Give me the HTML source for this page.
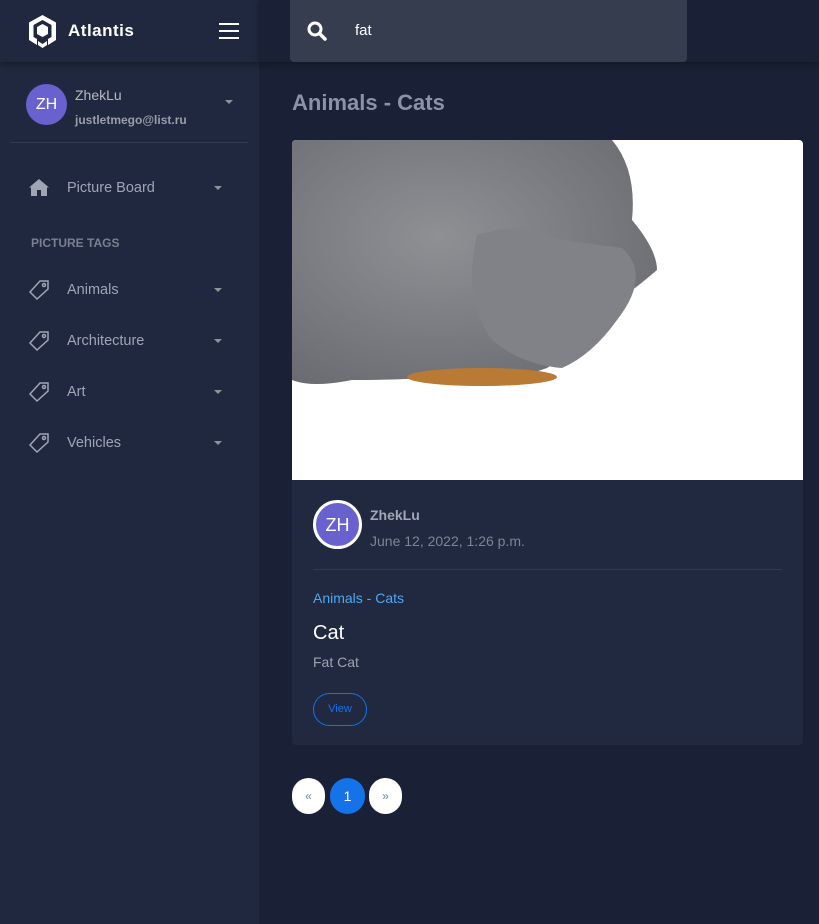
<!DOCTYPE html>
<html><head><meta charset="utf-8"><style>
*{margin:0;padding:0;box-sizing:border-box}
body{width:819px;height:924px;background:#1a2035;font-family:"Liberation Sans",sans-serif;position:relative;overflow:hidden}
.side{position:absolute;left:0;top:0;width:259px;height:924px;background:#1f283e}
.logo{height:62px;box-shadow:0 2px 6px rgba(0,0,0,.35);position:relative}
.logo .t{position:absolute;left:68px;top:21px;color:#fff;font-weight:bold;font-size:17px;letter-spacing:.5px}
.burger{position:absolute;left:219px;top:23px;width:20px}
.burger i{display:block;height:2px;background:#fff;margin-bottom:5px}
.user{position:absolute;left:10px;top:62px;width:238px;height:81px;border-bottom:1px solid #2f3a55}
.av{position:absolute;border-radius:50%;background:#6861ce;color:#fff;text-align:center}
.nm{position:absolute;color:#b9babf;font-size:14px}
.caret{position:absolute;width:0;height:0;border-left:4px solid transparent;border-right:4px solid transparent;border-top:4px solid #8d9498}
.item{position:absolute;left:67px;color:#a0a5b5;font-size:14.5px}
.main h1{position:absolute;left:292px;top:90px;color:#8b92a9;font-size:22px;font-weight:bold}
.search{position:absolute;left:290px;top:0;width:397px;height:62px;background:#363d4f;border-radius:0 0 4px 4px}
.card{position:absolute;left:292px;top:140px;width:511px;height:605px;background:#202940;border-radius:4px;overflow:hidden}
.pg{position:absolute;top:778px;width:33px;height:36px;border-radius:18px;background:#fff;color:#6c7cb2;text-align:center;line-height:36px;font-size:12px}
</style></head><body>
<div class="side">
 <div class="logo">
  <svg style="position:absolute;left:27px;top:14px" width="31" height="35" viewBox="0 0 31 35"><path d="M15.5 1 L29 8.5 V26 L21 31 V25 L24.5 23 V11 L15.5 6 L6.5 11 V23 L10 25 V31 L2 26 V8.5Z" fill="#fff"/><path d="M15.5 10 L21 13 V20 L15.5 23 L10 20 V13Z" fill="#fff"/><path d="M11 27 L15.5 30 L20 27 V31 L15.5 34 L11 31Z" fill="#fff"/></svg>
  <div class="t">Atlantis</div>
  <div class="burger"><i></i><i></i><i></i></div>
 </div>
 <div class="user">
  <div class="av" style="left:16px;top:22px;width:41px;height:41px;line-height:41px;font-size:16px">ZH</div>
  <div class="nm" style="left:65px;top:25px">ZhekLu</div>
  <div class="nm" style="left:65px;top:51px;font-size:12px;font-weight:bold;color:#9a9ea8">justletmego@list.ru</div>
  <div class="caret" style="left:215px;top:38px"></div>
 </div>
 <svg style="position:absolute;left:28px;top:178px" width="22" height="19" viewBox="0 0 22 19"><path d="M11 1 L1 9.5 L3 9.5 L3 18 H9 V12 H13 V18 H19 V9.5 H21Z" fill="#a0a5b5"/></svg>
 <div class="item" style="top:180px">Picture Board</div><div class="caret" style="left:214px;top:186px"></div>
 <div style="position:absolute;left:31px;top:236px;color:#7a8090;font-size:12px;font-weight:bold">PICTURE TAGS</div>
 <div class="item" style="top:282px">Animals</div><div class="caret" style="left:214px;top:288px"></div>
 <div class="item" style="top:333px">Architecture</div><div class="caret" style="left:214px;top:339px"></div>
 <div class="item" style="top:384px">Art</div><div class="caret" style="left:214px;top:390px"></div>
 <div class="item" style="top:435px">Vehicles</div><div class="caret" style="left:214px;top:441px"></div>
 <svg style="position:absolute;left:28px;top:280px" width="22" height="180" viewBox="0 0 22 180"><g fill="none" stroke="#a0a5b5" stroke-width="1.5"><path d="M12 1 H20 V9 L9 19 L2 12 Z"/><circle cx="16" cy="5" r="1.5"/></g>
 <g fill="none" stroke="#a0a5b5" stroke-width="1.5" transform="translate(0,51)"><path d="M12 1 H20 V9 L9 19 L2 12 Z"/><circle cx="16" cy="5" r="1.5"/></g>
 <g fill="none" stroke="#a0a5b5" stroke-width="1.5" transform="translate(0,102)"><path d="M12 1 H20 V9 L9 19 L2 12 Z"/><circle cx="16" cy="5" r="1.5"/></g>
 <g fill="none" stroke="#a0a5b5" stroke-width="1.5" transform="translate(0,153)"><path d="M12 1 H20 V9 L9 19 L2 12 Z"/><circle cx="16" cy="5" r="1.5"/></g></svg>
</div>
<div style="position:absolute;left:259px;top:0;width:560px;height:62px;background:#1a2035;box-shadow:0 2px 6px rgba(0,0,0,.3)"></div>
<div class="search">
 <svg style="position:absolute;left:17px;top:21px" width="20" height="20" viewBox="0 0 20 20"><circle cx="8" cy="8" r="6" fill="none" stroke="#fff" stroke-width="3"/><path d="M12.5 12.5 L18 18" stroke="#fff" stroke-width="3.5" stroke-linecap="round"/></svg>
 <div style="position:absolute;left:65px;top:22px;color:#fff;font-size:15px">fat</div>
</div>
<div class="main"><h1>Animals - Cats</h1></div>
<div class="card">
 <div style="height:340px;background:#fff;position:relative;overflow:hidden">
  <svg width="511" height="340" viewBox="0 0 511 340"><defs><radialGradient id="g" cx=".4" cy=".4" r=".7"><stop offset="0" stop-color="#8e9094"/><stop offset="1" stop-color="#6a6c71"/></radialGradient></defs>
  <path d="M0 0 H320 Q345 30 340 80 Q365 110 365 130 Q330 160 310 170 Q285 210 255 228 Q230 238 200 232 Q140 240 60 240 Q20 248 0 240Z" fill="url(#g)"/>
  <path d="M185 95 Q230 80 270 100 L330 108 Q360 135 325 180 Q300 215 270 228 Q230 225 200 200 Q170 160 185 95Z" fill="#808287"/>
  <ellipse cx="190" cy="237" rx="75" ry="9" fill="#b87a35"/></svg>
 </div>
 <div class="av" style="left:21px;top:360px;width:49px;height:49px;line-height:45px;font-size:18px;border:3px solid #fff">ZH</div>
 <div style="position:absolute;left:78px;top:367px;color:#a2a7b5;font-size:14px;font-weight:bold">ZhekLu</div>
 <div style="position:absolute;left:78px;top:393px;color:#7f8493;font-size:14px">June 12, 2022, 1:26 p.m.</div>
 <div style="position:absolute;left:21px;top:429px;width:469px;border-top:1px solid #2f3a55"></div>
 <div style="position:absolute;left:21px;top:450px;color:#4fa7f2;font-size:14px">Animals - Cats</div>
 <div style="position:absolute;left:21px;top:482px;color:#fff;font-size:20px">Cat</div>
 <div style="position:absolute;left:21px;top:514px;color:#9ea3b0;font-size:14px">Fat Cat</div>
 <div style="position:absolute;left:21px;top:553px;width:54px;height:33px;border:1px solid #1572e8;border-radius:17px;color:#1572e8;font-size:11px;text-align:center;line-height:31px">View</div>
</div>
<div class="pg" style="left:292px">«</div>
<div class="pg" style="left:330px;width:35px;background:#1572e8;color:#fff;font-size:14px">1</div>
<div class="pg" style="left:369px">»</div>
</body></html>
